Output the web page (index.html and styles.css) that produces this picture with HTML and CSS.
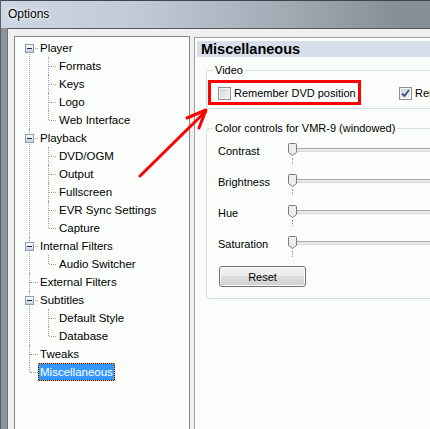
FILE: index.html
```html
<!DOCTYPE html>
<html lang="en">
<head>
  <meta charset="UTF-8" />
  <title>Options</title>
  <link rel="stylesheet" href="styles.css">
</head>
<body>
  <div class="window">
    <div class="titlebar">Options</div>
    <div class="client">
      <div class="tree">
        <ul class="tree-root">
          <li><span class="toggle"></span><span class="label">Player</span>
            <ul>
              <li><span class="label">Formats</span></li>
              <li><span class="label">Keys</span></li>
              <li><span class="label">Logo</span></li>
              <li><span class="label">Web Interface</span></li>
            </ul>
          </li>
          <li><span class="toggle"></span><span class="label">Playback</span>
            <ul>
              <li><span class="label">DVD/OGM</span></li>
              <li><span class="label">Output</span></li>
              <li><span class="label">Fullscreen</span></li>
              <li><span class="label">EVR Sync Settings</span></li>
              <li><span class="label">Capture</span></li>
            </ul>
          </li>
          <li><span class="toggle"></span><span class="label">Internal Filters</span>
            <ul>
              <li><span class="label">Audio Switcher</span></li>
            </ul>
          </li>
          <li><span class="label">External Filters</span></li>
          <li><span class="toggle"></span><span class="label">Subtitles</span>
            <ul>
              <li><span class="label">Default Style</span></li>
              <li><span class="label">Database</span></li>
            </ul>
          </li>
          <li><span class="label">Tweaks</span></li>
          <li><span class="label selected">Miscellaneous</span></li>
        </ul>
      </div>

      <div class="page">
        <div class="page-title">Miscellaneous</div>

        <fieldset class="group group-video">
          <legend>Video</legend>
          <div class="check-row">
            <label class="check-item marked"><span class="check"></span>Remember DVD position</label>
            <label class="check-item far"><span class="check"><svg width="11" height="11" viewBox="0 0 11 11"><path d="M2 5.5 L4.5 8 L9 2" fill="none" stroke="#3b4f8f" stroke-width="1.8"/></svg></span>Remember File position</label>
          </div>
        </fieldset>

        <fieldset class="group group-color">
          <legend>Color controls for VMR-9 (windowed)</legend>
          <div class="slider-row">
            <span class="slider-label">Contrast</span>
            <div class="slider"><div class="track"></div><svg class="thumb" width="9" height="13" viewBox="0 0 9 13"><path d="M1.5 0.5 H7.5 A1 1 0 0 1 8.5 1.5 V9.5 L4.5 12.5 L0.5 9.5 V1.5 A1 1 0 0 1 1.5 0.5 Z" fill="#ececec" stroke="#7b7b7b"/></svg><span class="tick"></span></div>
          </div>
          <div class="slider-row">
            <span class="slider-label">Brightness</span>
            <div class="slider"><div class="track"></div><svg class="thumb" width="9" height="13" viewBox="0 0 9 13"><path d="M1.5 0.5 H7.5 A1 1 0 0 1 8.5 1.5 V9.5 L4.5 12.5 L0.5 9.5 V1.5 A1 1 0 0 1 1.5 0.5 Z" fill="#ececec" stroke="#7b7b7b"/></svg><span class="tick"></span></div>
          </div>
          <div class="slider-row">
            <span class="slider-label">Hue</span>
            <div class="slider"><div class="track"></div><svg class="thumb" width="9" height="13" viewBox="0 0 9 13"><path d="M1.5 0.5 H7.5 A1 1 0 0 1 8.5 1.5 V9.5 L4.5 12.5 L0.5 9.5 V1.5 A1 1 0 0 1 1.5 0.5 Z" fill="#ececec" stroke="#7b7b7b"/></svg><span class="tick"></span></div>
          </div>
          <div class="slider-row">
            <span class="slider-label">Saturation</span>
            <div class="slider"><div class="track"></div><svg class="thumb" width="9" height="13" viewBox="0 0 9 13"><path d="M1.5 0.5 H7.5 A1 1 0 0 1 8.5 1.5 V9.5 L4.5 12.5 L0.5 9.5 V1.5 A1 1 0 0 1 1.5 0.5 Z" fill="#ececec" stroke="#7b7b7b"/></svg><span class="tick"></span></div>
          </div>
          <button class="btn">Reset</button>
        </fieldset>
      </div>
    </div>

    <!-- annotation arrow drawn over the dialog -->
    <svg class="arrow" width="430" height="429" viewBox="0 0 430 429">
      <g fill="none" stroke="#ff0000" stroke-width="3" stroke-linecap="round" stroke-linejoin="round">
        <path d="M140 176 L205 112"/>
        <path d="M187 118 L206 110 L199 128"/>
      </g>
    </svg>
  </div>
</body>
</html>
```

FILE: styles.css
```css
body {
  margin: 0;
  overflow: hidden;
  background: #8c9299;
  font-family: 'Liberation Sans', Arial, sans-serif;
  color: #000;
}

.window {
  position: relative;
  width: 640px;
  height: 460px;
  border-top: 1px solid #3f444a;
  border-left: 1px solid #5a5f65;
  background: #8c9299;
}

.titlebar {
  height: 27px;
  line-height: 27px;
  padding-left: 7px;
  font-size: 12px;
  background: linear-gradient(90deg, #ccd7e3 0%, #bfcad6 22%, #a1a9b3 45%, #888e97 62%, #868c95 100%);
  text-shadow: 0 0 6px #fff, 0 0 3px #fff;
}

.client {
  display: flex;
  align-items: flex-start;
  height: 432px;
  margin-left: 6px;
  border-top: 1px solid #52575d;
  border-left: 1px solid #6b7076;
  background: #f0f0f0;
}

/* tree */

.tree {
  width: 174px;
  height: 420px;
  margin: 7px 0 0 6px;
  padding-top: 2px;
  border: 1px solid #828790;
  background: #fcfefc;
  font-size: 11.5px;
}

.tree ul {
  list-style: none;
  margin: 0;
  padding: 0;
}

.tree li {
  position: relative;
  padding-left: 23px;
}

.tree li li {
  padding-left: 19px;
}

.tree li::before {
  content: '';
  position: absolute;
  left: 14px;
  top: 0;
  bottom: 0;
  border-left: 1px dotted #a0a0a0;
}

.tree li::after {
  content: '';
  position: absolute;
  left: 15px;
  top: 9px;
  width: 8px;
  border-top: 1px dotted #a0a0a0;
}

.tree li li::before {
  left: 10px;
}

.tree li li::after {
  left: 11px;
  width: 7px;
}

.tree-root > li:first-child::before {
  top: 9px;
}

.tree li:last-child::before {
  bottom: auto;
  height: 9px;
}

.toggle {
  position: absolute;
  left: 10px;
  top: 5px;
  z-index: 1;
  width: 9px;
  height: 9px;
  box-sizing: border-box;
  border: 1px solid #8d9cb0;
  background: linear-gradient(#ffffff, #c7ced8);
}

.toggle::before {
  content: '';
  position: absolute;
  left: 1px;
  top: 3px;
  width: 5px;
  height: 1px;
  background: #1b2a4a;
}

.label {
  display: inline-block;
  height: 18px;
  box-sizing: border-box;
  padding: 0 1px;
  border: 1px solid transparent;
  line-height: 16px;
  vertical-align: top;
  white-space: nowrap;
}

.label.selected {
  color: #fff;
  border: 1px dotted #f5a33a;
  background: linear-gradient(#3399ff, #3399ff) padding-box, #1a1a1a border-box;
}

/* right page */

.page {
  flex: 1;
  height: 420px;
  margin: 8px 0 0 4px;
  padding: 3px 0 0 2px;
  border: 1px solid #a0a0a0;
  background: #fbfdfb;
  font-size: 11px;
}

.page-title {
  height: 16px;
  line-height: 16px;
  padding-left: 4px;
  background: #d6dee9;
  font-size: 14.5px;
  font-weight: bold;
}

.group {
  min-width: 0;
  margin: 6px 10px 0 9px;
  padding: 3px 0 3px 0;
  border: 1px solid #d5dfe5;
  border-radius: 3px;
}

.group legend {
  margin-left: 6px;
  padding: 0 2px;
  line-height: 14px;
}

.group-color {
  margin-top: 12px;
  padding: 1px 0 11px 0;
}

.check-row {
  display: flex;
  align-items: center;
}

.check-item {
  display: flex;
  align-items: center;
  gap: 3px;
  height: 21px;
  white-space: nowrap;
}

.check-item.marked {
  width: 153px;
  height: 25px;
  box-sizing: border-box;
  margin-left: 1px;
  padding-left: 7px;
  border: 3px solid #ff0000;
}

.check-item.far {
  margin-left: 38px;
}

.check {
  display: flex;
  align-items: center;
  justify-content: center;
  width: 13px;
  height: 13px;
  box-sizing: border-box;
  margin-top: 2px;
  border: 1px solid #8e8f8f;
  background: linear-gradient(135deg, #cfd1d4, #f7f7f7);
  box-shadow: inset 0 0 0 1px #f6f6f6;
}

.slider-row {
  display: flex;
  height: 31px;
  padding-left: 11px;
}

.slider-label {
  width: 70px;
  padding-top: 8px;
  line-height: 14px;
}

.slider {
  position: relative;
  flex: 1;
  height: 22px;
  margin-top: 7px;
}

.track {
  height: 2px;
  margin: 5px 0 0 1px;
  border-top: 1px solid #a8a8a8;
  border-bottom: 1px solid #d8d8d8;
  background: #e9e9e9;
}

.thumb {
  position: absolute;
  left: 0;
  top: 0;
}

.tick {
  position: absolute;
  left: 4px;
  top: 15px;
  height: 6px;
  border-left: 1px dotted #a0a0a0;
}

.btn {
  display: block;
  width: 87px;
  height: 21px;
  margin: 6px 0 0 12px;
  padding: 0;
  border: 1px solid #707070;
  border-radius: 3px;
  background: linear-gradient(#f2f2f2 0%, #ebebeb 50%, #dddddd 50%, #cfcfcf 100%);
  box-shadow: inset 0 0 0 1px #fbfbfb;
  font-family: 'Liberation Sans', Arial, sans-serif;
  font-size: 11px;
  color: #000;
}

.arrow {
  position: absolute;
  left: -1px;
  top: -1px;
  pointer-events: none;
}
```
